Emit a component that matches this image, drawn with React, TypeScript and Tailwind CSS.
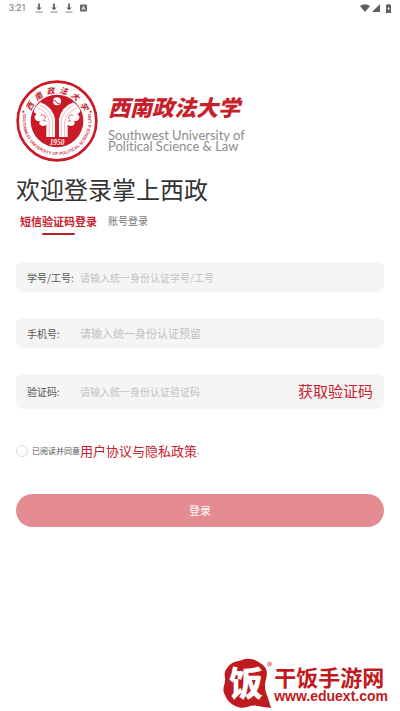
import { useState } from "react";

const DownloadIcon = () => (
  <svg viewBox="0 0 8 10" className="h-[10px] w-2" aria-hidden="true">
    <path d="M3.1 0.5h1.8v4h1.9L4 7.3 1.2 4.5h1.9z" fill="#666" />
    <path d="M0.5 8.6h7v0.9h-7z" fill="#777" />
  </svg>
);

const StatusBar = () => (
  <div className="flex h-4 items-center justify-between px-[9px] font-['Roboto',sans-serif] text-[9px] leading-4 text-[#707070]">
    <div className="flex items-center gap-[7px]">
      <span className="mr-[2px]">3:21</span>
      <DownloadIcon />
      <DownloadIcon />
      <DownloadIcon />
      <svg viewBox="0 0 7 8" className="h-2 w-[7px]" aria-hidden="true">
        <rect x="0" y="0.5" width="7" height="7" rx="1" fill="#666" />
        <path
          d="M1.8 6 3.5 2l1.7 4M2.4 4.8h2.2"
          stroke="#fff"
          strokeWidth="0.8"
          fill="none"
        />
      </svg>
    </div>
    <div className="flex items-center gap-[2px]">
      <svg viewBox="0 0 10 8" className="h-2 w-[10px]" aria-hidden="true">
        <path d="M0 1.9Q5-1.3 10 1.9L5 8z" fill="#606060" />
      </svg>
      <svg viewBox="0 0 8 8" className="h-2 w-2" aria-hidden="true">
        <path d="M8 0v8H0z" fill="#606060" />
      </svg>
      <svg viewBox="0 0 5 9" className="ml-1 h-[9px] w-[5px]" aria-hidden="true">
        <path d="M1.5 0h2v0.8H5V9H0V0.8h1.5z" fill="#606060" />
        <path d="M2.9 2.3 1.4 5.1h1v1.8l1.3-2.8h-1z" fill="#fff" />
      </svg>
    </div>
  </div>
);

const Seal = () => (
  <svg
    viewBox="17 17 246 246"
    className="size-[82px] shrink-0"
    role="img"
    aria-label="西南政法大学"
  >
    <defs>
      <path id="seal-top" d="M61 169A84 84 0 1 1 219 169" />
      <path id="seal-bottom" d="M39 119A103 103 0 1 0 241 119" />
    </defs>
    <circle cx="140" cy="140" r="118" fill="#fff" stroke="#cb1a27" strokeWidth="8" />
    <circle cx="140" cy="140" r="79" fill="#cb1a27" />
    <circle cx="39" cy="112" r="3" fill="#cb1a27" />
    <circle cx="241" cy="112" r="3" fill="#cb1a27" />
    <text
      fontSize="24"
      fill="#c41925"
      className="font-['Noto_Sans_CJK_SC',sans-serif] font-bold italic"
    >
      <textPath href="#seal-top" startOffset="50%" textAnchor="middle">
        {"西南政法大学".split("").join("\u2002")}
      </textPath>
    </text>
    <text
      fontSize="13"
      fill="#d0404a"
      className="font-['Liberation_Sans',sans-serif] font-bold"
    >
      <textPath href="#seal-bottom" startOffset="50%" textAnchor="middle">
        SOUTHWEST UNIVERSITY OF POLITICAL SCIENCE &amp; LAW
      </textPath>
    </text>
    {/* globe */}
    <circle cx="140" cy="81" r="12" fill="#fff" />
    <path d="M129 79q8-2 10 5t9 4" stroke="#cb1a27" strokeWidth="3" fill="none" />
    {/* the two halves of the column */}
    <g id="half" fill="#fff">
      <path d="M70 111Q75 94 91 84Q127 98 134 135V188H108V151Q98 159 89 151Q84 145 91 140Q80 143 74 134Q70 125 79 119Q73 117 70 111Z" />
      <path
        d="M87 91Q122 106 127 139V187M80 101Q112 112 117 143V187"
        stroke="#e0707a"
        strokeWidth="1.5"
        fill="none"
      />
      <path
        d="M91 123q8-5 13 2t-4 11M98 140q6-4 10 2"
        stroke="#cb1a27"
        strokeWidth="2"
        fill="none"
      />
    </g>
    <use href="#half" transform="matrix(-1 0 0 1 280 0)" />
    <text
      x="140"
      y="211"
      fontSize="22"
      textAnchor="middle"
      fill="#fff"
      className="font-['Liberation_Serif',serif] font-bold italic"
    >
      1950
    </text>
  </svg>
);

const Watermark = () => (
  <div className="flex items-center justify-end pr-3">
    <svg viewBox="0 0 52 52" className="size-[52px]" aria-hidden="true">
      <path
        d="M6 9C10 3 15 4 20 2C27-1 34 2 38 5C45 9 46 14 44 21C42 27 43 33 46 40L49 50L35 48C29 46 22 52 16 49C10 47 5 43 3 37C-1 30 4 26 3 20C2 15 3 12 6 9Z"
        fill="#bf1a20"
      />
      <text
        x="24"
        y="38"
        fontSize="34"
        textAnchor="middle"
        fill="#fff"
        className="font-['Noto_Sans_CJK_SC',sans-serif] font-black"
      >
        饭
      </text>
      <circle cx="47.500" cy="6" r="2" fill="none" stroke="#bf1a20" strokeWidth="0.6" />
      <circle cx="47.500" cy="6" r="0.8" fill="#bf1a20" />
    </svg>
    <div className="text-[#bf1a20]">
      <p className="text-[22px] leading-6 font-bold">干饭手游网</p>
      <p className="font-['Liberation_Sans',sans-serif] text-sm leading-4 font-bold">
        www.eduext.com
      </p>
    </div>
  </div>
);

const App = () => {
  const [agreed, setAgreed] = useState(false);
  return (
    <div className="flex min-h-screen flex-col bg-white font-['Noto_Sans_CJK_SC',sans-serif]">
      <StatusBar />
      <main className="px-4 pt-16">
        <div className="flex items-center gap-[10px]">
          <Seal />
          <div>
            <p className="text-[22px] leading-8 font-black text-[#c8202b] italic">
              西南政法大学
            </p>
            <p className="mt-2 font-['Lato',sans-serif] text-[13px] leading-[11px] text-[#8c8c8c] [font-variant-ligatures:none]">
              Southwest University of
              <br />
              Political Science &amp; Law
            </p>
          </div>
        </div>

        <h1 className="mt-[11px] text-2xl leading-8 text-[#333]">欢迎登录掌上西政</h1>

        <div className="mt-[6px] flex items-start gap-[11px] pl-1">
          <button
            type="button"
            className="flex flex-col items-center text-[11px] leading-5 font-bold text-[#c8202f]"
          >
            短信验证码登录
            <span className="mt-[2px] h-[2px] w-[33px] rounded-full bg-[#b82334]" />
          </button>
          <button type="button" className="text-[10px] leading-5 text-[#777]">
            账号登录
          </button>
        </div>

        <form className="mt-[27px]" onSubmit={(e) => e.preventDefault()}>
          <div className="flex flex-col gap-[26px] text-[10px] text-[#555]">
            <div className="flex h-[30px] items-center rounded-md bg-[#f5f5f5] px-[11px]">
              <label htmlFor="account" className="w-[53px] shrink-0">
                学号/工号:
              </label>
              <input
                id="account"
                className="min-w-0 flex-1 outline-none placeholder:text-[#c2c2c4]"
                placeholder="请输入统一身份认证学号/工号"
              />
            </div>
            <div className="flex h-[30px] items-center rounded-md bg-[#f5f5f5] px-[11px]">
              <label htmlFor="phone" className="w-[53px] shrink-0">
                手机号:
              </label>
              <input
                id="phone"
                type="tel"
                className="min-w-0 flex-1 text-[11px] outline-none placeholder:text-[#c2c2c4]"
                placeholder="请输入统一身份认证预留"
              />
            </div>
            <div className="flex h-[35px] items-center rounded-md bg-[#f5f5f5] px-[11px]">
              <label htmlFor="code" className="w-[53px] shrink-0">
                验证码:
              </label>
              <input
                id="code"
                className="min-w-0 flex-1 outline-none placeholder:text-[#c2c2c4]"
                placeholder="请输入统一身份认证验证码"
              />
              <button type="button" className="shrink-0 text-[15px] text-[#c8202f]">
                获取验证码
              </button>
            </div>
          </div>

          <div className="mt-8 flex h-5 items-center">
            <input
              id="agree"
              type="checkbox"
              checked={agreed}
              onChange={(e) => setAgreed(e.target.checked)}
              className="mr-1 size-3 shrink-0 appearance-none rounded-full border border-[#d8d8d8] checked:bg-[#c8202f]"
            />
            <label htmlFor="agree" className="text-[8px] text-[#555]">
              已阅读并同意
            </label>
            <a href="#policy" className="text-[13px] text-[#c8202f]">
              用户协议与隐私政策
            </a>
            <span className="text-[8px] text-[#555]">.</span>
          </div>

          <button
            type="submit"
            className="mt-[33px] h-[33px] w-full rounded-full bg-[#e38b91] text-[11px] text-white"
          >
            登录
          </button>
        </form>
      </main>
      <footer className="mt-auto pb-px">
        <Watermark />
      </footer>
    </div>
  );
};

export default App;
